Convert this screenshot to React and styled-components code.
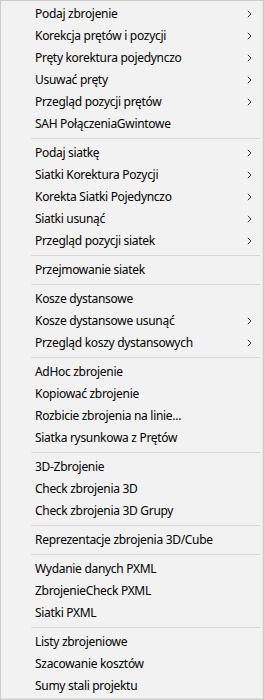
import React from "react";
import styled, { createGlobalStyle } from "styled-components";

const Global = createGlobalStyle`
  html, body { margin: 0; padding: 0; background: #ffffff; }
  * { box-sizing: border-box; }
`;

const Menu = styled.div`
  width: 264px;
  height: 700px;
  background: #f2f2f2;
  border: 1px solid #cccccc;
  box-shadow: inset -1px -1px 0 #e4e4e4;
  padding: 2px 0;
  display: flex;
  flex-direction: column;
  font-family: "Noto Sans", "Open Sans", sans-serif;
  font-size: 12px;
  letter-spacing: -0.3px;
  color: #000000;
`;

const Item = styled.div`
  height: 22px;
  display: flex;
  align-items: center;
  padding-left: 34px;
  padding-right: 11px;
  white-space: nowrap;
`;

const Label = styled.span`
  flex: 1;
  line-height: 22px;
`;

const Sep = styled.div`
  height: 7px;
  display: flex;
  align-items: center;
  padding: 0 3px 0 30px;
  &::after {
    content: "";
    display: block;
    flex: 1;
    height: 1px;
    background: #d7d7d7;
  }
`;

const Chevron = () => (
  <svg width="5" height="8" viewBox="0 0 5 8">
    <path d="M0.8 0.8 L4 4 L0.8 7.2" fill="none" stroke="#333" strokeWidth="1" />
  </svg>
);

const groups = [
  [
    ["Podaj zbrojenie", true],
    ["Korekcja prętów i pozycji", true],
    ["Pręty korektura pojedynczo", true],
    ["Usuwać pręty", true],
    ["Przegląd pozycji prętów", true],
    ["SAH PołączeniaGwintowe", false],
  ],
  [
    ["Podaj siatkę", true],
    ["Siatki Korektura Pozycji", true],
    ["Korekta Siatki Pojedynczo", true],
    ["Siatki usunąć", true],
    ["Przegląd pozycji siatek", true],
  ],
  [["Przejmowanie siatek", false]],
  [
    ["Kosze dystansowe", false],
    ["Kosze dystansowe usunąć", true],
    ["Przegląd koszy dystansowych", true],
  ],
  [
    ["AdHoc zbrojenie", false],
    ["Kopiować zbrojenie", false],
    ["Rozbicie zbrojenia na linie...", false],
    ["Siatka rysunkowa z Prętów", false],
  ],
  [
    ["3D-Zbrojenie", false],
    ["Check zbrojenia 3D", false],
    ["Check zbrojenia 3D Grupy", false],
  ],
  [["Reprezentacje zbrojenia 3D/Cube", false]],
  [
    ["Wydanie danych PXML", false],
    ["ZbrojenieCheck PXML", false],
    ["Siatki PXML", false],
  ],
  [
    ["Listy zbrojeniowe", false],
    ["Szacowanie kosztów", false],
    ["Sumy stali projektu", false],
  ],
];

export default function App() {
  return (
    <>
      <Global />
      <Menu>
        {groups.map((g, gi) => (
          <React.Fragment key={gi}>
            {gi > 0 && <Sep />}
            {g.map(([label, sub]) => (
              <Item key={label}>
                <Label>{label}</Label>
                {sub && <Chevron />}
              </Item>
            ))}
          </React.Fragment>
        ))}
      </Menu>
    </>
  );
}
